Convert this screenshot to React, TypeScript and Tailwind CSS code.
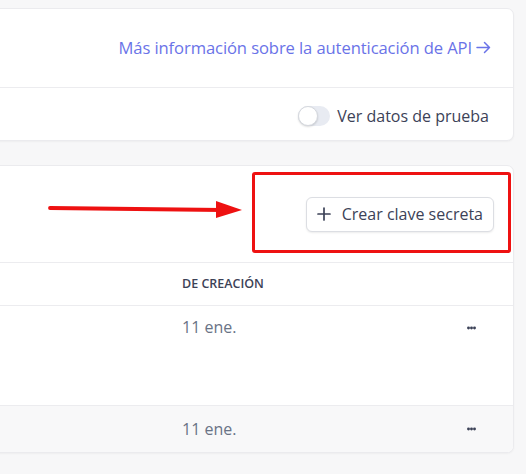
import React from "react";

function Dots() {
  return (
    <svg width="9" height="4" viewBox="0 0 9 4" className="block">
      <circle cx="1.5" cy="2" r="1.45" fill="#3c4257" />
      <circle cx="4.5" cy="2" r="1.45" fill="#3c4257" />
      <circle cx="7.5" cy="2" r="1.45" fill="#3c4257" />
    </svg>
  );
}

export default function App() {
  const font = { fontFamily: '"Open Sans", "Noto Sans", sans-serif' };
  return (
    <div
      className="relative w-[526px] h-[474px] overflow-hidden bg-[#f7f7f8] pt-[8px] pr-[12px]"
      style={font}
    >
      {/* Card 1 */}
      <div className="-ml-[10px] h-[133px] bg-white border border-[#ebebee] rounded-r-[7px] shadow-[0_1px_2px_rgba(0,0,0,0.04)] flex flex-col">
        <div className="h-[79px] flex items-center justify-end pr-[22px] border-b border-[#ececef]">
          <span className="flex items-center gap-[4px] text-[16.6px] text-[#6a73e8] tracking-[-0.1px]">
            <span>Más información sobre la autenticación de API</span>
            <svg width="15" height="13" viewBox="0 0 15 13" fill="none">
              <path d="M1 6.5h12.5M8.5 1.5l5 5-5 5" stroke="#6a73e8" strokeWidth="1.5" strokeLinecap="round" strokeLinejoin="round" />
            </svg>
          </span>
        </div>
        <div className="flex-1 flex items-center justify-end pr-[24px] pt-[4px]">
          <div className="flex items-center gap-[7px]">
            <div className="w-[32px] h-[20px] rounded-full bg-[#e8ebf2] relative">
              <div className="absolute left-0 top-0 w-[20px] h-[20px] rounded-full bg-white border border-[#d5d8de] shadow-[0_1px_2px_rgba(0,0,0,0.15)]" />
            </div>
            <span className="text-[16px] text-[#3c4257]">Ver datos de prueba</span>
          </div>
        </div>
      </div>

      {/* Card 2 */}
      <div className="-ml-[10px] mt-[24px] h-[288px] bg-white border border-[#ebebee] rounded-r-[7px] shadow-[0_1px_2px_rgba(0,0,0,0.04)] flex flex-col overflow-hidden">
        <div className="h-[97px] flex items-center justify-end pr-[19px] border-b border-[#ececef]">
          <button className="h-[35px] pl-[10px] pr-[10px] flex items-center gap-[11px] bg-white border border-[#dcdee3] rounded-[6px] shadow-[0_1px_2px_rgba(0,0,0,0.08)] text-[16px] text-[#3c4257]">
            <svg width="14" height="14" viewBox="0 0 14 14" fill="none">
              <path d="M7 1v12M1 7h12" stroke="#3c4257" strokeWidth="1.7" strokeLinecap="round" />
            </svg>
            <span>Crear clave secreta</span>
          </button>
        </div>
        <div className="h-[43px] flex items-center pl-[191px] border-b border-[#ececef]">
          <span className="text-[12.5px] font-semibold text-[#3c4257]">DE CREACIÓN</span>
        </div>
        <div className="h-[100px] flex items-start pl-[191px] pt-[9px] border-b border-[#ececef]">
          <span className="text-[16px] text-[#697386] w-[285px]">11 ene.</span>
          <div className="pt-[11px]">
            <Dots />
          </div>
        </div>
        <div className="flex-1 flex items-center pl-[191px] bg-[#f8f8f9]">
          <span className="text-[16px] text-[#697386] w-[285px]">11 ene.</span>
          <Dots />
        </div>
      </div>

      {/* Annotation: red box */}
      <div className="absolute left-[252px] top-[172px] w-[259px] h-[81px] border-[3px] border-[#ee1111] rounded-[3px]" />
      {/* Annotation: arrow */}
      <svg className="absolute left-[46px] top-[196px]" width="200" height="26" viewBox="0 0 200 26">
        <path d="M4 12 L176 14" stroke="#ee1111" strokeWidth="3.8" strokeLinecap="round" />
        <path d="M170 5 L196 14 L170 22 Z" fill="#ee1111" />
      </svg>
    </div>
  );
}
